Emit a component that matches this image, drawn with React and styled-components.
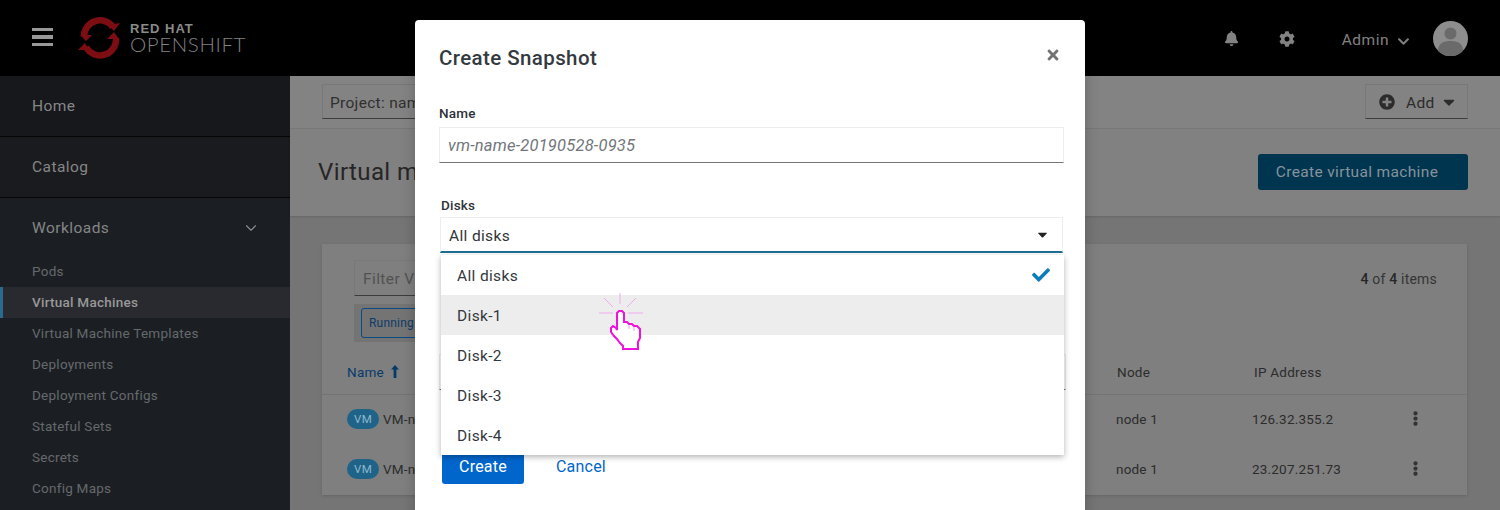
import React from "react";
import styled, { createGlobalStyle } from "styled-components";
import { FaBell, FaCog, FaCaretDown, FaCheck, FaTimes, FaEllipsisV, FaPlusCircle, FaChevronDown } from "react-icons/fa";
import { ChevronDown } from "lucide-react";

const Global = createGlobalStyle`
  html, body { margin: 0; padding: 0; background: #747474; }
  * { box-sizing: border-box; }
  body { font-family: Roboto, "Noto Sans", "Liberation Sans", sans-serif; }
`;

const Page = styled.div`
  position: relative; width: 1500px; height: 510px; overflow: hidden;
  display: flex; flex-direction: column;
`;
const Masthead = styled.header`
  height: 76px; flex: none; background: #000; display: flex; align-items: center; padding: 0 32px;
`;
const Burger = styled.div`
  width: 21px; height: 18px; margin-top: -2px; display: flex; flex-direction: column; justify-content: space-between;
  span { display: block; height: 3.4px; background: #989898; }
`;
const Brand = styled.div`
  display: flex; align-items: center; margin-left: 24px; margin-top: -3px;
`;
const BrandText = styled.div`
  margin-left: 7px; color: #8a8a8a; display: flex; flex-direction: column; padding-top: 3px;
`;
const RedHat = styled.span`
  font-family: "Liberation Sans", sans-serif; font-size: 13px; line-height: 12px; font-weight: 700; letter-spacing: 1px;
`;
const OpenShift = styled.span`
  font-family: Lato, sans-serif; font-size: 20.5px; line-height: 18px; font-weight: 300; letter-spacing: 0.6px; color: #828282;
`;
const MastRight = styled.div`
  margin-left: auto; display: flex; align-items: center;
`;
const MastIcon = styled.span`
  display: flex; font-size: ${p => p.$size || 16}px; margin-right: ${p => p.$gap || 0}px; margin-top: 1px; color: #828282;
`;
const Admin = styled.span`
  font-size: 15.500px; letter-spacing: 0.5px; color: #808080; margin-top: 4px; margin-right: 8px;
`;
const AdminChevron = styled.span`
  display: flex; font-size: 13px; color: #7f7f7f; margin-right: 23px; margin-top: 6px;
`;
const Body = styled.div`
  flex: 1; display: flex; min-height: 0;
`;
const Sidebar = styled.nav`
  width: 290px; flex: none; background: #1b1f23;
`;
const TopItem = styled.div`
  height: ${p => p.$h || 61}px; display: flex; align-items: center; padding: ${p => p.$h ? 1 : 0}px 32px ${p => p.$h ? 0 : 1}px; font-size: 15.5px; letter-spacing: 0.45px;
  color: #868686; background: ${p => p.$bg}; border-bottom: ${p => p.$line ? "1px solid #050505" : "0"};
  justify-content: space-between;
  svg { color: #8b8b8b; margin-right: -2px; margin-top: 1px; }
`;
const SubList = styled.div`
  display: flex; flex-direction: column;
`;
const SubItem = styled.div`
  height: 31px; display: flex; align-items: center; padding-left: ${p => p.$active ? 29 : 32}px; padding-bottom: 1px;
  font-size: 13.5px; letter-spacing: 0.25px; color: ${p => p.$active ? "#989898" : "#66696c"};
  font-weight: ${p => p.$active ? 500 : 400};
  background: ${p => p.$active ? "#292a2f" : "transparent"};
  border-left: ${p => p.$active ? "3px solid #2a6a8c" : "0"};
`;
const Main = styled.main`
  flex: 1; display: flex; flex-direction: column; min-width: 0; background: #757575;
`;
const Toolbar = styled.div`
  height: 53px; flex: none; background: #838383; border-bottom: 1px solid #787878;
  padding: 8px 32px 0; display: flex; justify-content: space-between; align-items: flex-start;
`;
const Selector = styled.div`
  width: 300px; height: 35px; border: 1px solid #787878; border-bottom-color: #3c3c3c;
  display: flex; align-items: center; padding: 2px 0 0 7px; font-size: 15.5px; letter-spacing: 0.3px; color: #303030;
`;
const AddButton = styled.div`
  width: 103px; height: 35px; border: 1px solid #787878; border-bottom-color: #3c3c3c;
  display: flex; align-items: center; padding: 2px 0 0 13px; font-size: 15.5px; letter-spacing: 0.3px; color: #2c2c2c; gap: 11px;
  span { display: flex; margin-top: -2px; }
  span:last-child { margin-left: -6px; }
`;
const PageHeader = styled.div`
  height: 87px; flex: none; background: #818181; box-shadow: 0 1px 2px rgba(0,0,0,.12);
  padding: 0 32px 2px 28px; display: flex; align-items: center; justify-content: space-between;
`;
const Heading = styled.h1`
  margin: 0; font-size: 24px; font-weight: 400; letter-spacing: 0.4px; color: #262626;
`;
const PrimaryDim = styled.div`
  width: 210px; height: 36px; padding: 0 12px 0 0; border-radius: 3px; background: #00354f; color: #87929b;
  display: flex; align-items: center; justify-content: center; font-size: 15.500px; letter-spacing: 0.35px;
`;
const Content = styled.div`
  flex: 1; padding: 28px 33px 0 32px; min-height: 0;
`;
const Card = styled.section`
  height: 251px; background: #7f7f7f; box-shadow: 0 1px 3px rgba(0,0,0,.14); padding-top: 16px;
`;
const FilterRow = styled.div`
  height: 36px; padding: 0 30px 0 32px; display: flex; align-items: flex-start; justify-content: space-between;
`;
const Filter = styled.div`
  width: 200px; height: 36px; border: 1px solid #787878; border-bottom-color: #3c3c3c;
  display: flex; align-items: center; padding: 2px 0 0 8px; font-size: 15.500px; letter-spacing: 0.4px; color: #525252;
`;
const Count = styled.div`
  font-size: 14px; letter-spacing: 0.2px; color: #353535; margin-top: 11px;
  b { font-weight: 500; color: #262626; }
`;
const ChipGroup = styled.div`
  margin: 8px 0 0 32px; width: 200px; height: 38px; background: #747474; display: flex; align-items: center; padding-left: 7px;
`;
const Chip = styled.div`
  height: 30px; width: 120px; border: 1px solid #0a4a85; border-radius: 3px; display: flex; align-items: center;
  padding-left: 7px; font-size: 12px; letter-spacing: 0.2px; color: #0d3c68;
`;
const TableHead = styled.div`
  display: grid; grid-template-columns: 770px 137px 1fr; height: 53px; padding: 22px 0 0 25px;
  border-bottom: 1px solid #747474; font-size: 13.5px; letter-spacing: 0.25px; color: #2c2c2c;
`;
const SortName = styled.span`
  color: #063a6b; display: flex; gap: 6px; align-items: flex-start;
`;
const Row = styled.div`
  display: grid; grid-template-columns: 769px 136px 163px 1fr; height: 50px; padding: 0 0 2px 25px; align-items: center;
  font-size: 13.5px; letter-spacing: 0.2px; color: #2c2c2c;
`;
const Kebab = styled.span`
  display: flex; font-size: 15px; color: #333; margin-top: -2px; margin-left: -7px;
`;
const VmCell = styled.span`
  display: flex; align-items: center; gap: 4px;
`;
const VmBadge = styled.span`
  width: 32px; height: 20px; border-radius: 10px; background: #1f6488; color: #8fb6cc;
  font-size: 11.5px; display: flex; align-items: center; justify-content: center;
`;
const Backdrop = styled.div`
  position: absolute; inset: 0; display: flex; justify-content: center; align-items: flex-start;
`;
const Modal = styled.div`
  width: 670px; height: 520px; margin-top: 20px; background: #fff; border-radius: 4px;
  box-shadow: 0 0 14px rgba(0,0,0,.22); padding: 24px 21px 0 24px; display: flex; flex-direction: column;
`;
const ModalHead = styled.div`
  display: flex; justify-content: space-between; align-items: flex-start; height: 32px;
`;
const ModalTitle = styled.h2`
  margin: 0; font-size: 20.500px; line-height: 28px; font-weight: 500; letter-spacing: 0.4px; color: #333a40;
`;
const Close = styled.span`
  display: flex; font-size: 16px; color: #737373; margin-top: 3px; margin-right: 3px;
`;
const Label = styled.div`
  font-size: 13.5px; line-height: 18px; font-weight: 500; color: #2d3338; letter-spacing: 0.2px;
  margin-left: ${p => p.$indent || 0}px; margin-top: ${p => p.$top}px;
`;
const NameInput = styled.div`
  height: 36px; margin-top: 5px; border: 1px solid #ededed; border-bottom: 1px solid #72767b;
  display: flex; align-items: center; padding-left: 8px; font-size: 16.5px; font-style: italic; letter-spacing: 0.2px; color: #72767b;
`;
const SelectWrap = styled.div`
  position: relative; margin: 3px 1px 0 1px;
`;
const Select = styled.div`
  height: 36px; border: 1px solid #ededed; border-bottom: 2px solid #1f6f92;
  display: flex; align-items: center; justify-content: space-between; padding: 2px 12px 0 8px; font-size: 15.5px; letter-spacing: 0.35px; color: #2f3438;
  span { display: flex; font-size: 15px; color: #222; margin-top: -2px; }
`;
const Menu = styled.div`
  position: absolute; left: 1px; right: -1px; top: 38px; height: 200px; background: #fff; z-index: 2;
  box-shadow: 0 2px 6px rgba(0,0,0,.3); display: flex; flex-direction: column;
`;
const MenuItem = styled.div`
  height: 40px; flex: none; padding: 1px 14px 0 16px; display: flex; align-items: center; justify-content: space-between;
  font-size: 15.5px; letter-spacing: 0.35px; color: #33383c; background: ${p => p.$hover ? "#ededed" : "#fff"};
  span { display: flex; color: #0d7cb8; font-size: 18px; margin-top: -1px; }
`;
const HiddenField = styled.div`
  height: 36px; margin: 101px -2px 0 0; border: 1px solid #ededed; border-bottom: 1px solid #72767b;
`;
const Actions = styled.div`
  margin: 58px 0 0 3px; display: flex; align-items: center; gap: 32px; font-size: 16px; letter-spacing: 0.2px;
`;
const CreateBtn = styled.div`
  width: 82px; height: 36px; border-radius: 3px; background: #06c; color: #fff;
  display: flex; align-items: center; justify-content: center;
`;
const CancelBtn = styled.div`
  color: #06c;
`;
const HandCursor = styled.svg`
  position: absolute; left: 596px; top: 290px; z-index: 5;
`;

const Logo = () => (
  <svg width="46" height="44" viewBox="0 0 46 44" aria-hidden="true">
    <g fill="none" stroke="#7c0d12" strokeWidth="6.500">
      <path d="M7 21 A 16 16 0 0 1 36 12" />
      <path d="M39 23 A 16 16 0 0 1 9 32" />
    </g>
    <g fill="#7c0d12">
      <path d="M43 8 L37 16 L31 10 Z" />
      <path d="M1 35 L8 28 L12 35 Z" />
      <path d="M3 20 L15 20 L9 26 Z" />
      <path d="M42 24 L30 24 L37 17 Z" />
    </g>
  </svg>
);

const Avatar = () => (
  <svg width="35" height="35" viewBox="0 0 35 35" aria-hidden="true">
    <circle cx="17.500" cy="17.500" r="17.500" fill="#8d8d8d" />
    <circle cx="17.500" cy="12.500" r="6" fill="#6a6a6a" />
    <path d="M5 30 C5 22 11 20 17.500 20 C24 20 30 22 30 30 A17.500 17.500 0 0 1 5 30 Z" fill="#6a6a6a" />
  </svg>
);

const SortArrow = () => (
  <svg width="10" height="15" viewBox="0 0 10 15" aria-hidden="true">
    <path d="M5 1 L9 5.500 H6.400 V14 H3.600 V5.500 H1 Z" fill="#063a6b" />
  </svg>
);

const Hand = () => (
  <HandCursor width="50" height="64" viewBox="0 0 50 64" aria-hidden="true">
    <g stroke="#f0a8ec" strokeWidth="1" fill="none">
      <path d="M24 3 V14" />
      <path d="M8 8 L17 17" />
      <path d="M40 8 L31 17" />
      <path d="M3 23 H17" />
      <path d="M32 23 H47" />
    </g>
    <path d="M21 23 L23 21 H26 L28 23 V32 H31 L33 34 H36 L38 36 H41 L44 39 V48 L42 52 V59 H27 V56 L24 53 L21 49 L18 46 L15 42 V38 L17 36 L20 38 L21 40 Z"
      fill="#fff" stroke="#f012dc" strokeWidth="2" strokeLinejoin="miter" />
    <path d="M33 35 V39 M38 37 V41" stroke="#f39cec" strokeWidth="1" fill="none" />
  </HandCursor>
);

const subItems = ["Pods", "Virtual Machines", "Virtual Machine Templates", "Deployments", "Deployment Configs", "Stateful Sets", "Secrets", "Config Maps"];
const rows = [["node 1", "126.32.355.2"], ["node 1", "23.207.251.73"]];
const disks = ["All disks", "Disk-1", "Disk-2", "Disk-3", "Disk-4"];

export default function App() {
  return (
    <Page>
      <Global />
      <Masthead>
        <Burger><span /><span /><span /></Burger>
        <Brand>
          <Logo />
          <BrandText>
            <RedHat>RED HAT</RedHat>
            <OpenShift>OPENSHIFT</OpenShift>
          </BrandText>
        </Brand>
        <MastRight>
          <MastIcon $size={15} $gap={40}><FaBell /></MastIcon>
          <MastIcon $size={16} $gap={47}><FaCog /></MastIcon>
          <Admin>Admin</Admin>
          <AdminChevron><FaChevronDown /></AdminChevron>
          <Avatar />
        </MastRight>
      </Masthead>
      <Body>
        <Sidebar>
          <TopItem $bg="#17181c" $line>Home</TopItem>
          <TopItem $bg="#191b1f" $line>Catalog</TopItem>
          <TopItem $bg="#1b1f23" $h={58}>Workloads<ChevronDown size={18} strokeWidth={1.5} /></TopItem>
          <SubList>
            {subItems.map(s => <SubItem key={s} $active={s === "Virtual Machines"}>{s}</SubItem>)}
          </SubList>
        </Sidebar>
        <Main>
          <Toolbar>
            <Selector>Project: name</Selector>
            <AddButton><span><FaPlusCircle size={16} /></span>Add<span><FaCaretDown size={18} /></span></AddButton>
          </Toolbar>
          <PageHeader>
            <Heading>Virtual machines</Heading>
            <PrimaryDim>Create virtual machine</PrimaryDim>
          </PageHeader>
          <Content>
            <Card>
              <FilterRow>
                <Filter>Filter VMs</Filter>
                <Count><b>4</b> of <b>4</b> items</Count>
              </FilterRow>
              <ChipGroup><Chip>Running</Chip></ChipGroup>
              <TableHead>
                <SortName>Name <SortArrow /></SortName>
                <span>Node</span>
                <span>IP Address</span>
              </TableHead>
              {rows.map(([node, ip]) => (
                <Row key={ip}>
                  <VmCell><VmBadge>VM</VmBadge>VM-name</VmCell>
                  <span>{node}</span>
                  <span>{ip}</span>
                  <Kebab><FaEllipsisV /></Kebab>
                </Row>
              ))}
            </Card>
          </Content>
        </Main>
      </Body>
      <Backdrop>
        <Modal>
          <ModalHead>
            <ModalTitle>Create Snapshot</ModalTitle>
            <Close><FaTimes /></Close>
          </ModalHead>
          <Label $top={28}>Name</Label>
          <NameInput>vm-name-20190528-0935</NameInput>
          <Label $indent={2} $top={33}>Disks</Label>
          <SelectWrap>
            <Select>All disks<span><FaCaretDown /></span></Select>
            <Menu>
              {disks.map((d, i) => (
                <MenuItem key={d} $hover={i === 1}>{d}{i === 0 && <span><FaCheck /></span>}</MenuItem>
              ))}
            </Menu>
          </SelectWrap>
          <HiddenField />
          <Actions>
            <CreateBtn>Create</CreateBtn>
            <CancelBtn>Cancel</CancelBtn>
          </Actions>
        </Modal>
      </Backdrop>
      <Hand />
    </Page>
  );
}
